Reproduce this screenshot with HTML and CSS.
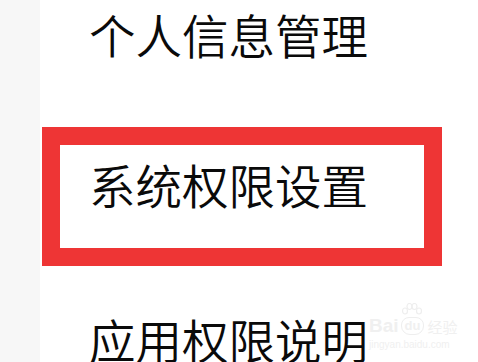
FILE: index.html
```html
<!DOCTYPE html>
<html lang="zh">
<head>
<meta charset="utf-8">
<link rel="stylesheet" href="styles.css">
</head>
<body>
<div class="page">
  <aside class="strip"></aside>
  <main class="list">
    <div class="item first">个人信息管理</div>
    <div class="item highlight">系统权限设置</div>
    <div class="item last">应用权限说明</div>
  </main>
  <div class="watermark">
    <div class="wm-top">
      <span class="wm-bai">Bai</span>
      <span class="wm-du">
        <svg class="wm-paw" width="22" height="14" viewBox="0 0 22 14">
          <ellipse cx="4" cy="8" rx="2.5" ry="3" fill="none" stroke="#eeeeee" stroke-width="1.2"/>
          <ellipse cx="8.5" cy="3.5" rx="2.5" ry="3" fill="none" stroke="#eeeeee" stroke-width="1.2"/>
          <ellipse cx="13.5" cy="3.5" rx="2.5" ry="3" fill="none" stroke="#eeeeee" stroke-width="1.2"/>
          <ellipse cx="18" cy="8" rx="2.5" ry="3" fill="none" stroke="#eeeeee" stroke-width="1.2"/>
        </svg>
        du
      </span>
      <span class="wm-jy">经验</span>
    </div>
    <div class="wm-url">jingyan.baidu.com</div>
  </div>
</div>
</body>
</html>
```
FILE: styles.css
```css
html, body {
  margin: 0;
  padding: 0;
  background: #ffffff;
}
.page {
  position: relative;
  width: 478px;
  height: 362px;
  overflow: hidden;
  display: flex;
  font-family: "Noto Sans CJK SC", "Noto Sans", sans-serif;
}
.strip {
  width: 40px;
  flex: none;
  background: #f7f7f7;
}
.list {
  flex: 1;
  display: flex;
  flex-direction: column;
  padding-left: 2px;
}
.item {
  font-size: 46.5px;
  font-weight: 350;
  line-height: 47px;
  color: #0a0a0a;
  padding-left: 47px;
  white-space: nowrap;
}
.first {
  padding-top: 10px;
  box-sizing: border-box;
  height: 136px;
}
.highlight {
  width: 400px;
  height: 145px;
  box-sizing: border-box;
  border: 18px solid #ee3535;
  padding-left: 29px;
  padding-top: 15px;
}
.last {
  padding-top: 49px;
}
.watermark {
  position: absolute;
  left: 369px;
  top: 306px;
  color: #f0f0f0;
  font-family: "Liberation Sans", Arial, sans-serif;
}
.wm-top {
  display: flex;
  align-items: flex-end;
  height: 30px;
}
.wm-bai {
  font-size: 19px;
  font-weight: bold;
  line-height: 20px;
}
.wm-du {
  position: relative;
  font-size: 13px;
  font-weight: bold;
  line-height: 16px;
  border: 1.5px solid #eeeeee;
  border-radius: 8px 8px 9px 9px;
  padding: 0 3px;
  margin: 0 3px 1px 2px;
}
.wm-paw {
  position: absolute;
  left: -1px;
  top: -15px;
}
.wm-jy {
  font-family: "Noto Sans CJK SC", sans-serif;
  font-size: 15px;
  line-height: 18px;
}
.wm-url {
  font-size: 10px;
  line-height: 12px;
  margin-top: 3px;
}
```
